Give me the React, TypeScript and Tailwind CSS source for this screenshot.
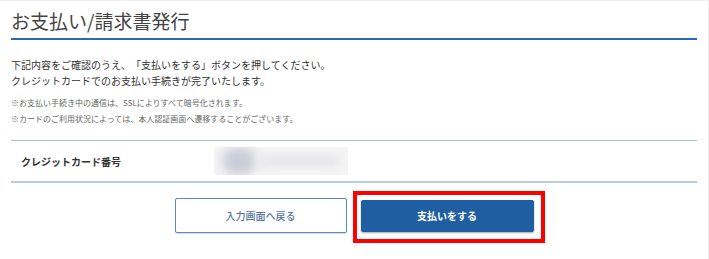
const font = "font-['Noto_Sans_CJK_JP','Noto_Sans',sans-serif]";

export default function App() {
  return (
    <div className={`h-[259px] w-[709px] overflow-hidden border-r border-t border-[#f0f0f0] bg-white ${font}`}>
      <div className="px-[11px]">
        <h1 className="border-b-2 border-[#2f6aa8] pb-[3px] pt-[6px] text-[19px] font-normal leading-[28px] text-[#444]">
          お支払い/請求書発行
        </h1>
        <p className="mt-[17px] text-[10px] leading-[16px] text-[#333] [text-spacing-trim:space-all]">
          下記内容をご確認のうえ、「支払いをする」ボタンを押してください。
          <br />
          クレジットカードでのお支払い手続きが完了いたします。
        </p>
        <div className="mt-[6px] text-[8px] leading-[15.5px] text-[#666]">
          <p>※お支払い手続き中の通信は、SSLによりすべて暗号化されます。</p>
          <p>※カードのご利用状況によっては、本人認証画面へ遷移することがございます。</p>
        </div>
        <div className="mt-[14px] flex h-[43px] items-center border-b-2 border-t border-b-[#bccbdc] border-t-[#a8c0dc]">
          <div className="w-[203px] pl-[10px] text-[10px] font-bold text-[#333]">
            クレジットカード番号
          </div>
          <div className="relative h-[28px] w-[134px] overflow-hidden bg-[#f6f6f7]">
            <span className="absolute left-[8px] top-[0px] h-[28px] w-[34px] rounded-full bg-[#c9ccd6] blur-[6px]" />
            <span className="absolute left-[44px] top-[8px] h-[12px] w-[84px] rounded-full bg-[#e6e6ea] blur-[5px]" />
          </div>
        </div>
        <div className="mt-[15px] flex items-center justify-center gap-[14px]">
          <button
            type="button"
            className="h-[35px] w-[172px] rounded-[2px] border border-[#5a8ac6] bg-white text-[10px] font-medium text-[#5476a3] shadow-[0_1px_1px_rgba(0,0,0,0.15)]"
          >
            入力画面へ戻る
          </button>
          <div className="relative">
            <span className="absolute -bottom-[11px] -left-[8px] -right-[11px] -top-[9px] border-4 border-[#ff0000]" />
            <button
              type="button"
              className="relative block h-[32px] w-[173px] rounded-[2px] bg-[#1f5fa1] text-[10px] font-bold text-white shadow-[0_1px_2px_rgba(0,0,0,0.35)]"
            >
              支払いをする
            </button>
          </div>
        </div>
      </div>
    </div>
  );
}
